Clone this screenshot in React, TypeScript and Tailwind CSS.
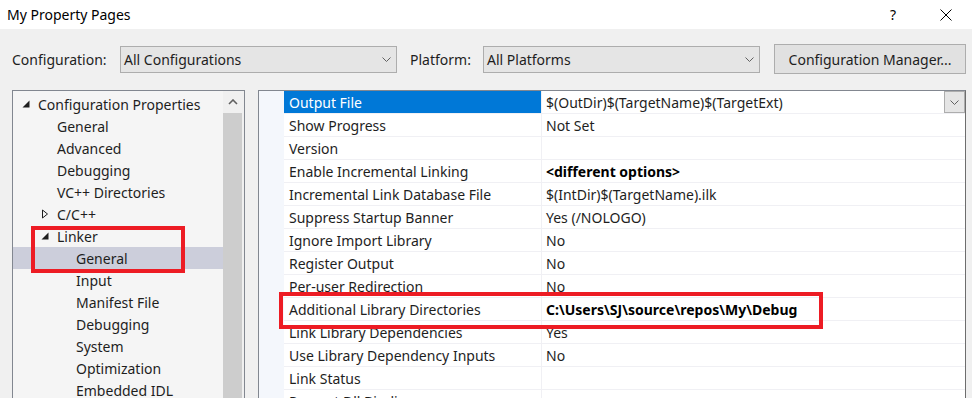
import React from 'react';

type Row = { name: string; value: string; bold?: boolean };

const rows: Row[] = [
  { name: 'Output File', value: '$(OutDir)$(TargetName)$(TargetExt)' },
  { name: 'Show Progress', value: 'Not Set' },
  { name: 'Version', value: '' },
  { name: 'Enable Incremental Linking', value: '<different options>', bold: true },
  { name: 'Incremental Link Database File', value: '$(IntDir)$(TargetName).ilk' },
  { name: 'Suppress Startup Banner', value: 'Yes (/NOLOGO)' },
  { name: 'Ignore Import Library', value: 'No' },
  { name: 'Register Output', value: 'No' },
  { name: 'Per-user Redirection', value: 'No' },
  { name: 'Additional Library Directories', value: 'C:\\Users\\SJ\\source\\repos\\My\\Debug', bold: true },
  { name: 'Link Library Dependencies', value: 'Yes' },
  { name: 'Use Library Dependency Inputs', value: 'No' },
  { name: 'Link Status', value: '' },
  { name: 'Prevent Dll Binding', value: '' },
];

type Node = { label: string; indent: number; toggle?: 'open' | 'closed'; selected?: boolean };

const tree: Node[] = [
  { label: 'Configuration Properties', indent: 0, toggle: 'open' },
  { label: 'General', indent: 1 },
  { label: 'Advanced', indent: 1 },
  { label: 'Debugging', indent: 1 },
  { label: 'VC++ Directories', indent: 1 },
  { label: 'C/C++', indent: 1, toggle: 'closed' },
  { label: 'Linker', indent: 1, toggle: 'open' },
  { label: 'General', indent: 2, selected: true },
  { label: 'Input', indent: 2 },
  { label: 'Manifest File', indent: 2 },
  { label: 'Debugging', indent: 2 },
  { label: 'System', indent: 2 },
  { label: 'Optimization', indent: 2 },
  { label: 'Embedded IDL', indent: 2 },
];

function Chevron({ className }: { className?: string }) {
  return (
    <svg width="9" height="5" viewBox="0 0 9 5" className={className}>
      <path d="M0.5 0.5 L4.5 4.5 L8.5 0.5" fill="none" stroke="#606060" strokeWidth="1" />
    </svg>
  );
}

function Combo({ text, width }: { text: string; width: string }) {
  return (
    <div className={`${width} h-[27px] flex items-center justify-between border border-[#adadad] bg-[#e5e5e5] pl-[3px] pr-[5px]`}>
      <span>{text}</span>
      <Chevron />
    </div>
  );
}

function Toggle({ kind }: { kind: 'open' | 'closed' }) {
  if (kind === 'open') {
    return (
      <svg width="8" height="8" viewBox="0 0 8 8">
        <path d="M7.5 0.5 L7.5 7.5 L0.5 7.5 Z" fill="#1e1e1e" />
      </svg>
    );
  }
  return (
    <svg width="8" height="10" viewBox="0 0 8 10">
      <path d="M1.5 1 L6.5 5 L1.5 9 Z" fill="none" stroke="#1e1e1e" strokeWidth="1" />
    </svg>
  );
}

export default function App() {
  return (
    <div className="w-[972px] h-[398px] overflow-hidden bg-[#f0f0f0] text-[14px] text-[#1e1e1e] font-['Noto_Sans',sans-serif]">
      {/* title bar */}
      <div className="h-[29px] bg-white flex items-center justify-between pl-[7px]">
        <span className="text-black">My Property Pages</span>
        <div className="flex items-center h-full">
          <span className="w-[60px] text-center text-black">?</span>
          <span className="w-[46px] flex justify-center mr-[3px]">
            <svg width="12" height="12" viewBox="0 0 12 12">
              <path d="M0.5 0.5 L11.5 11.5 M11.5 0.5 L0.5 11.5" stroke="#000" strokeWidth="1" />
            </svg>
          </span>
        </div>
      </div>

      {/* configuration toolbar */}
      <div className="h-[61px] flex items-start pt-[15px] pl-[12px]">
        <div className="flex items-center mt-[2px]">
          <span className="w-[108px]">Configuration:</span>
          <Combo text="All Configurations" width="w-[277px]" />
          <span className="w-[86px] pl-[13px]">Platform:</span>
          <Combo text="All Platforms" width="w-[277px]" />
        </div>
        <div className="ml-[14px] w-[192px] h-[30px] flex items-center justify-center border border-[#adadad] bg-[#e1e1e1]">
          Configuration Manager...
        </div>
      </div>

      {/* panels */}
      <div className="flex pl-[12px] items-start">
        {/* tree */}
        <div className="relative w-[233px] h-[320px] border border-[#828790] bg-[#f5f5f5] flex">
          <div className="flex-1 pt-[2px]">
            {tree.map((n, i) => (
              <div
                key={i}
                className={`h-[22px] flex items-center ${n.selected ? 'bg-[#cccedb]' : ''}`}
                style={{ paddingLeft: 6 + n.indent * 19 }}
              >
                <span className="w-[19px] flex justify-start pl-[3px]">{n.toggle && <Toggle kind={n.toggle} />}</span>
                <span>{n.label}</span>
              </div>
            ))}
          </div>
          <div className="w-[21px] bg-[#f0f0f0] flex flex-col items-start">
            <div className="w-[19px] h-[22px] flex items-center justify-center">
              <svg width="10" height="6" viewBox="0 0 10 6">
                <path d="M1 5 L5 1 L9 5" fill="none" stroke="#606060" strokeWidth="1.6" />
              </svg>
            </div>
            <div className="w-[19px] flex-1 bg-[#cdcdcd]" />
          </div>
          <div className="absolute left-[18px] top-[135px] w-[154px] h-[47px] border-[4px] border-[#ed1c24]" />
        </div>

        {/* property grid */}
        <div className="relative ml-[13px] w-[708px] h-[320px] border border-[#828790] border-r-[#6d6d6d] bg-white flex">
          <div className="w-[25px] bg-[#f4f7fc]" />
          <div className="flex-1">
            {rows.map((r, i) => (
              <div key={i} className="h-[23px] flex border-b border-[#f0f0f4]">
                <div
                  className={`w-[258px] flex items-center pl-[5px] border-r border-[#f0f0f4] ${
                    i === 0 ? 'bg-[#0078d7] text-white' : ''
                  }`}
                >
                  {r.name}
                </div>
                <div className={`flex-1 flex items-center pl-[4px] ${r.bold ? 'font-bold text-black' : ''}`}>
                  {r.value}
                </div>
                {i === 0 && (
                  <div className="w-[21px] h-full flex items-center justify-center border border-[#adadad] bg-[#e5e5e5]">
                    <Chevron />
                  </div>
                )}
              </div>
            ))}
          </div>
          <div className="absolute left-[20px] top-[201px] w-[544px] h-[37px] border-[4px] border-[#ed1c24]" />
        </div>
      </div>
    </div>
  );
}
